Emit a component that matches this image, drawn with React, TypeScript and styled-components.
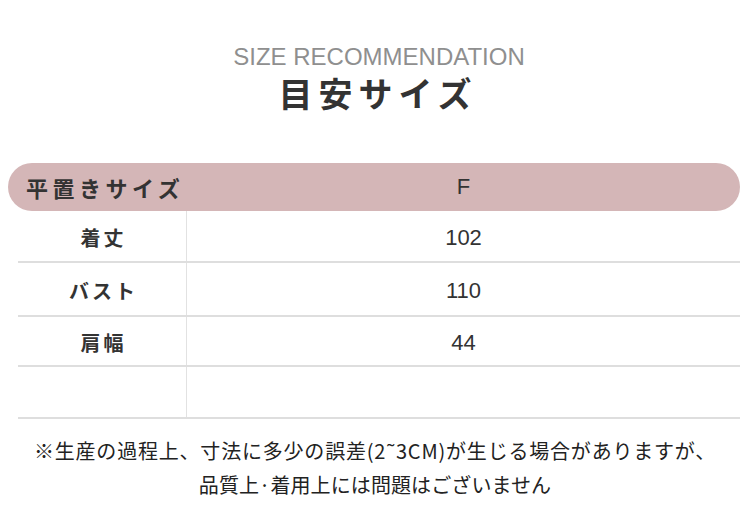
import React from "react";
import styled, { createGlobalStyle } from "styled-components";

const GlobalStyle = createGlobalStyle`
  body {
    margin: 0;
    background: #ffffff;
    font-family: "Noto Sans CJK JP", "Noto Sans", sans-serif;
  }
`;

const rows = [
  { label: "着丈", value: "102", height: 52 },
  { label: "バスト", value: "110", height: 54 },
  { label: "肩幅", value: "44", height: 50 },
  { label: "", value: "", height: 52 },
];

const App = () => {
  return (
    <Page>
      <GlobalStyle />
      <TitleBlock>
        <SubTitle>SIZE RECOMMENDATION</SubTitle>
        <Heading>目安サイズ</Heading>
      </TitleBlock>
      <Table>
        <HeaderBar>
          <HeaderLabel>平置きサイズ</HeaderLabel>
          <ValueText>F</ValueText>
        </HeaderBar>
        {rows.map((row, idx) => (
          <Row key={idx} $height={row.height}>
            <LabelCell>{row.label}</LabelCell>
            <ValueCell>
              <ValueText>{row.value}</ValueText>
            </ValueCell>
          </Row>
        ))}
      </Table>
      <Note>
        <NoteLine $spacing={0.8}>
          ※生産の過程上、寸法に多少の誤差(2˜3CM)が生じる場合がありますが、
        </NoteLine>
        <NoteLine $spacing={0.1}>品質上·着用上には問題はございません</NoteLine>
      </Note>
    </Page>
  );
};

export default App;

const Page = styled.div`
  width: 750px;
  height: 526px;
  padding-top: 43px;
  box-sizing: border-box;
  overflow: hidden;
`;

const TitleBlock = styled.div`
  display: flex;
  flex-direction: column;
  align-items: center;
`;

const SubTitle = styled.div`
  font-family: "Liberation Sans", Arial, sans-serif;
  font-size: 24px;
  line-height: 28px;
  color: #8f8f8f;
  margin-left: 8px;
`;

const Heading = styled.div`
  font-size: 34px;
  line-height: 44px;
  font-weight: 700;
  color: #333333;
  letter-spacing: 6px;
  margin-left: 6px;
`;

const Table = styled.div`
  margin: 48px 10px 0 8px;
  display: flex;
  flex-direction: column;
`;

const HeaderBar = styled.div`
  display: grid;
  grid-template-columns: 179px 1fr;
  align-items: center;
  height: 48px;
  background-color: #d4b6b7;
  border-radius: 24px;
`;

const HeaderLabel = styled.div`
  padding-left: 18px;
  font-size: 22px;
  font-weight: 700;
  color: #333333;
  letter-spacing: 4.5px;
  white-space: nowrap;
`;

const Row = styled.div<{ $height: number }>`
  display: grid;
  grid-template-columns: 169px 1fr;
  margin-left: 10px;
  height: ${(p) => p.$height}px;
  padding-top: 3px;
  box-sizing: border-box;
  border-bottom: 2px solid #dedede;
`;

const LabelCell = styled.div`
  display: flex;
  align-items: center;
  justify-content: center;
  border-right: 1px solid #e2e2e2;
  margin-top: -3px;
  padding-top: 3px;
  font-size: 20px;
  font-weight: 700;
  color: #333333;
  letter-spacing: 3px;
  padding-left: 3px;
`;

const ValueCell = styled.div`
  display: flex;
  align-items: center;
  justify-content: center;
`;

const ValueText = styled.div`
  text-align: center;
  font-family: "Liberation Sans", Arial, sans-serif;
  font-size: 22px;
  color: #333333;
`;

const Note = styled.div`
  margin-top: 15px;
  display: flex;
  flex-direction: column;
  align-items: center;
`;

const NoteLine = styled.div<{ $spacing: number }>`
  font-size: 20px;
  line-height: 34px;
  color: #222222;
  letter-spacing: ${(p) => p.$spacing}px;
  white-space: nowrap;
`;
